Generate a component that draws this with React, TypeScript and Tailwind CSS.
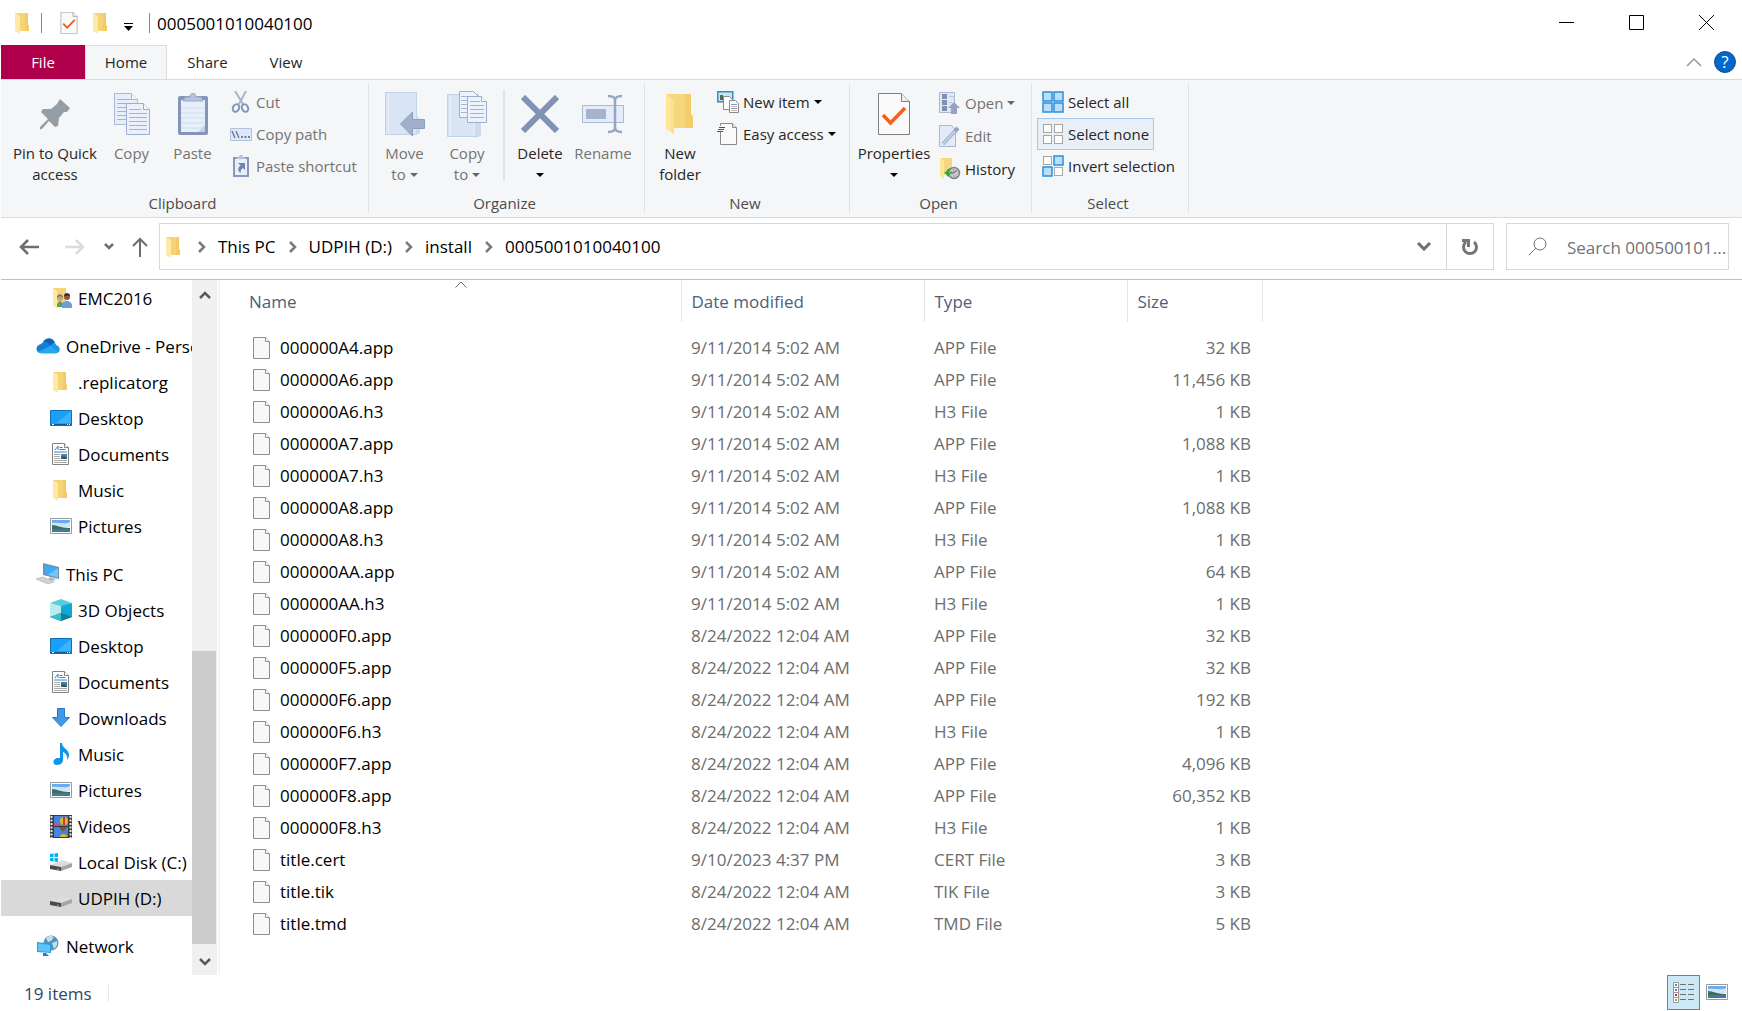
import React, { useState } from "react";

type IconProps = { className?: string };

/* ---------- shared icons ---------- */

const FolderIcon = ({ className = "w-[22px] h-[22px]" }: IconProps) => (
  <svg viewBox="0 0 22 22" className={`shrink-0 ${className}`}>
    <path d="M3 1h13v12l1 1v5H7z" fill="#f5d478" />
    <path d="M13 1h3v12l1 1v5h-4z" fill="#f2cb63" />
    <path d="M3 1l5 3v18l-5-3z" fill="#ffe9a6" />
  </svg>
);

const FileIcon = () => (
  <svg viewBox="0 0 17 22" className="w-[17px] h-[22px] shrink-0">
    <path d="M.5.5h12l4 4v17H.5z" fill="#f7f8f9" stroke="#8f8f8f" />
    <path d="M12.5.5v4h4" fill="#fff" stroke="#8f8f8f" />
  </svg>
);

const CheckDocIcon = ({ className = "w-[18px] h-[22px]" }: IconProps) => (
  <svg viewBox="0 0 32 42" className={`shrink-0 ${className}`}>
    <path d="M.5.5h23l8 8v33H.5z" fill="#fafafa" stroke="#7f7f7f" />
    <path d="M23.500.5v8h8" fill="#eee" stroke="#7f7f7f" />
    <path d="M5 22l7.500 8L27 15" fill="none" stroke="#f2601a" strokeWidth="3.500" />
  </svg>
);

const Caret = ({ className = "text-black" }: IconProps) => (
  <svg viewBox="0 0 8 4" className={`w-2 h-1 shrink-0 ${className}`}>
    <path d="M0 0h8L4 4z" fill="currentColor" />
  </svg>
);

const ChevronRight = () => (
  <svg viewBox="0 0 8 12" className="w-2 h-3 shrink-0">
    <path d="M1 1l5 5-5 5" fill="none" stroke="#7a7a7a" strokeWidth="2.500" />
  </svg>
);

/* ---------- ribbon icons ---------- */

const PinIcon = () => (
  <svg viewBox="0 0 32 32" className="w-8 h-8">
    <path d="M21 1l10 9-3 4-3 0-5 6-1 8-3 1-6-6-7 8-2 .5V29l8-8-7-7 2-3 8 0 6-5z" fill="#949ea4" />
  </svg>
);

const SheetLines = ({ x, y, w, n, step = 4 }: { x: number; y: number; w: number; n: number; step?: number }) => (
  <>
    {Array.from({ length: n }).map((_, i) => (
      <path key={i} d={`M${x} ${y + i * step}h${w}`} stroke="#a3b3d0" />
    ))}
  </>
);

const CopyIcon = () => (
  <svg viewBox="0 0 36 42" className="w-9 h-[42px]">
    <path d="M.5.5h17l6 6v25H.5z" fill="#e6eefa" stroke="#a9b9d4" />
    <path d="M17.500.5v6h6" fill="#f6f9fe" stroke="#a9b9d4" />
    <SheetLines x={3} y={6.5} w={14} n={6} />
    <path d="M12.500 10.500h17l6 6v25h-23z" fill="#eaf1fc" stroke="#9dafce" />
    <path d="M29.500 10.500v6h6" fill="#f6f9fe" stroke="#9dafce" />
    <SheetLines x={15} y={16.5} w={12} n={1} />
    <SheetLines x={15} y={20.5} w={18} n={5} />
  </svg>
);

const PasteIcon = () => (
  <svg viewBox="0 0 30 42" className="w-[30px] h-[42px]">
    <rect y="3" width="30" height="39" rx="2" fill="#8395b9" />
    <path d="M3 7h24v32H3z" fill="#e7effb" />
    <path d="M3 15h24M3 20h24M3 25h24M3 30h24M3 35h24" stroke="#d0dcee" />
    <path d="M20 39l7-7v7z" fill="#c3d1e8" />
    <path d="M5 8l2-4h5c0-5 6-5 6 0h5l2 4z" fill="#b7c3d9" stroke="#98a8c5" />
  </svg>
);

const CutIcon = () => (
  <svg viewBox="0 0 22 22" className="w-[22px] h-[22px] shrink-0">
    <path d="M5 0l8 13M16 0L9 13" stroke="#a9b5ca" strokeWidth="2" />
    <ellipse cx="6" cy="17" rx="3" ry="4" fill="none" stroke="#8294b5" strokeWidth="2" transform="rotate(25 6 17)" />
    <ellipse cx="15" cy="17" rx="3" ry="4" fill="none" stroke="#8294b5" strokeWidth="2" transform="rotate(-25 15 17)" />
  </svg>
);

const CopyPathIcon = () => (
  <svg viewBox="0 0 22 13" className="w-[22px] h-[13px] shrink-0">
    <path d="M.5.5h21v12H.5z" fill="#dfe8f7" stroke="#b4c3dc" />
    <path d="M2 3l3 7M6 3l3 7" stroke="#6c7fa5" strokeWidth="1.500" />
    <path d="M11 9h2M14.500 9h2M18 9h2" stroke="#6c7fa5" strokeWidth="2" />
  </svg>
);

const PasteShortcutIcon = () => (
  <svg viewBox="0 0 22 22" className="w-[22px] h-[22px] shrink-0">
    <path d="M4 3h14v18H4z" fill="#e7effb" stroke="#8799bd" strokeWidth="2" />
    <path d="M6 4l2-2h1c0-3 4-3 4 0h1l2 2z" fill="#b7c3d9" />
    <path d="M8 8h7v7l-2-2c-2 1-3 3-2 5-4-2-3-6-.5-7.500z" fill="#6f84ae" />
  </svg>
);

const MoveToIcon = () => (
  <svg viewBox="0 0 40 44" className="w-10 h-11">
    <path d="M.5.500h31v42H.5z" fill="#d9e4f4" stroke="#c3d1e7" />
    <path d="M3.500 1v41" stroke="#e9f0fa" />
    <path d="M31 23l4 4v15h-4z" fill="#cedaed" />
    <path d="M15.500 32l12-12v7.500h12v9h-12V44z" fill="#a0afca" stroke="#8d9fbf" />
  </svg>
);

const CopyToIcon = () => (
  <svg viewBox="0 0 40 46" className="w-10 h-[46px]">
    <path d="M.5 3.500h31v42H.5z" fill="#d9e4f4" stroke="#c3d1e7" />
    <path d="M3.500 4v41M27 30v15" stroke="#eff4fb" />
    <path d="M28 32h6v13h-6z" fill="#cedaed" />
    <path d="M12.500.5h14l5 5v21h-19z" fill="#edf3fd" stroke="#9dafce" />
    <SheetLines x={14} y={5.5} w={10} n={5} />
    <path d="M20.500 5.500h14l5 5v21h-19z" fill="#edf3fd" stroke="#9dafce" />
    <path d="M34.500 5.500v5h5" fill="#fff" stroke="#9dafce" />
    <SheetLines x={23} y={10.5} w={10} n={1} />
    <SheetLines x={23} y={14.5} w={14} n={4} />
  </svg>
);

const DeleteIcon = () => (
  <svg viewBox="0 0 38 38" className="w-[38px] h-[38px]">
    <path d="M2 2l34 34M36 2L2 36" stroke="#8193b5" strokeWidth="6" />
  </svg>
);

const RenameIcon = () => (
  <svg viewBox="0 0 42 40" className="w-[42px] h-10">
    <path d="M.5 11.500h41v17H.5z" fill="#e4ecfa" stroke="#aabad5" />
    <path d="M4 15h20v10H4z" fill="#a5b3cf" />
    <path d="M26 2c5 0 7 1 7 5v26c0 4-2 5-7 5M40 2c-5 0-7 1-7 5v26c0 4 2 5 7 5" fill="none" stroke="#95a5c3" strokeWidth="2.500" />
  </svg>
);

const BigFolderIcon = () => (
  <svg viewBox="0 0 30 42" className="w-[30px] h-[42px]">
    <path d="M1 1h25v20l2 3v11H9z" fill="#f6d77f" />
    <path d="M20 1h6v20l2 3v11h-8z" fill="#f3cd68" />
    <path d="M1 1l8 6v34l-8-5z" fill="#ffe699" />
    <path d="M6 5l3 2v34l-3-2z" fill="#fde08a" />
  </svg>
);

const NewItemIcon = () => (
  <svg viewBox="0 0 22 22" className="w-[22px] h-[22px] shrink-0">
    <path d="M.75.750h15v10h-15z" fill="#c6e6f6" stroke="#3c8db5" strokeWidth="1.500" />
    <path d="M3 4h3v5H3z" fill="#4c6c58" />
    <path d="M6.500 5.500h6l3 3v10h-9z" fill="#fff" stroke="#8a8a8a" />
    <path d="M12.500 9.500h6l3 3v9h-9z" fill="#fff" stroke="#8a8a8a" />
    <path d="M14 13.500h6M14 17.500h6" stroke="#6aa5d8" />
    <path d="M14 15.500h6M14 19.500h6" stroke="#e4a79b" />
  </svg>
);

const EasyAccessIcon = () => (
  <svg viewBox="0 0 22 22" className="w-[22px] h-[22px] shrink-0">
    <path d="M3.500.5h12l4 4v17h-16z" fill="#fafafa" stroke="#8a8a8a" />
    <path d="M15.500.5v4h4" fill="#eee" stroke="#8a8a8a" />
    <path d="M2 3h6v6H0V6h2z" fill="#f5f6f7" />
    <path d="M2 4.500h6M1 6.500h6M0 8.500h6" stroke="#1b5fa8" />
  </svg>
);

const OpenIcon = () => (
  <svg viewBox="0 0 22 22" className="w-[22px] h-[22px] shrink-0">
    <path d="M.5.5h15v20H.5z" fill="#dfe8f7" stroke="#a9b9d4" />
    <path d="M3 2h5v5H3zM3 8h5v5H3zM3 14h5v5H3z" fill="#7f90b1" />
    <path d="M10 4.500h5M10 10.500h3" stroke="#b9c6dd" />
    <path d="M15 10l6 6h-3v6h-6v-6H9z" fill="#93a3c1" />
  </svg>
);

const EditIcon = () => (
  <svg viewBox="0 0 22 22" className="w-[22px] h-[22px] shrink-0">
    <path d="M.5.5h12l4 4v17H.5z" fill="#e2ebf9" stroke="#a9b9d4" />
    <path d="M4 19L17 5" stroke="#a8b7d1" strokeWidth="4" />
    <path d="M4 19L17 5" stroke="#dfe6f2" />
    <path d="M16 6l3-3" stroke="#92a3c2" strokeWidth="4" />
  </svg>
);

const HistoryIcon = () => (
  <svg viewBox="0 0 22 22" className="w-[22px] h-[22px] shrink-0">
    <path d="M1 0h12v17H4z" fill="#f6d77f" />
    <path d="M1 0l4 3v18l-4-3z" fill="#ffe699" />
    <circle cx="15" cy="15" r="5.500" fill="#c3c8ca" stroke="#7d8588" strokeWidth="1.500" />
    <path d="M12 14h1M14 12h1M17 13h1M15 18h1" stroke="#777" />
    <path d="M14 15l3-2M14 15h-3" stroke="#555" />
    <path d="M5 14h2c1-3 3-4 6-4-2 1-3 3-3 5h2l-3 4z" fill="#2fa836" />
  </svg>
);

const Tile = ({ x, y, on }: { x: number; y: number; on?: boolean }) => (
  <rect x={x} y={y} width={on ? 9 : 8} height={on ? 9 : 8} fill={on ? "#b9e0fb" : "#fdfdfd"} stroke={on ? "#2b8fdc" : "#a6a6a6"} strokeWidth={on ? 1.5 : 1} />
);

const SelectIcon = ({ on }: { on: boolean[] }) => (
  <svg viewBox="0 0 22 22" className="w-[22px] h-[22px] shrink-0">
    <Tile x={on[0] ? 1 : 1.5} y={on[0] ? 1 : 1.5} on={on[0]} />
    <Tile x={on[1] ? 12 : 12.5} y={on[1] ? 1 : 1.5} on={on[1]} />
    <Tile x={on[2] ? 1 : 1.5} y={on[2] ? 12 : 12.5} on={on[2]} />
    <Tile x={on[3] ? 12 : 12.5} y={on[3] ? 12 : 12.5} on={on[3]} />
  </svg>
);

/* ---------- navigation pane icons ---------- */

const UserFolderIcon = () => (
  <svg viewBox="0 0 22 22" className="w-[22px] h-[22px] shrink-0">
    <path d="M3 1h13v18H6z" fill="#f5d478" />
    <path d="M3 1l4 3v18l-4-3z" fill="#ffe9a6" />
    <path d="M7 20v-3l3-3 4 3v3z" fill="#5da04f" />
    <circle cx="10" cy="11" r="3" fill="#c9a77c" />
    <path d="M7 11c0-5 6-5 6 0l-3-2z" fill="#7c7a5e" />
    <path d="M12 21v-5l4-2c4 0 6 2 6 5v2z" fill="#6e9fd4" />
    <circle cx="17" cy="10" r="3" fill="#8a5a3c" />
    <path d="M14 9c0-4 6-4 6 0z" fill="#3f3530" />
  </svg>
);

const OneDriveIcon = () => (
  <svg viewBox="0 0 24 16" className="w-6 h-4 shrink-0">
    <path d="M7 4c3-5 10-5 12 1l-6 6z" fill="#0a64b9" />
    <path d="M5 15c-6 0-6-8 0-9 3-3 6-2 8 0l4 5-7 4z" fill="#1180d6" />
    <path d="M16 6c2-2 4-1 4 1 5 1 5 8 0 8h-7V9z" fill="#1a97e8" />
    <path d="M2 14l12-6 8 6-2 1.500H5z" fill="#28a8ea" />
  </svg>
);

const DesktopIcon = () => (
  <svg viewBox="0 0 22 16" className="w-[22px] h-4 shrink-0">
    <path d="M.5.5h21v15H.5z" fill="#18a0fb" stroke="#0f6fb5" />
    <path d="M21 1v12H7z" fill="#3eb2ff" />
    <path d="M1 14.500h20" stroke="#0a5c99" />
    <path d="M2 14.500h2M17 14.500h1M19 14.500h1" stroke="#fff" />
  </svg>
);

const DocumentsIcon = () => (
  <svg viewBox="0 0 22 22" className="w-[22px] h-[22px] shrink-0">
    <path d="M2.500.5h12l4 4v17h-16z" fill="#fff" stroke="#828282" />
    <path d="M14.500.5v4h4" fill="#fff" stroke="#828282" />
    <path d="M5 7l3-4v4M9.500 4.500h3M9.500 6.500h6M4 9h13" stroke="#2b8bd0" fill="none" />
    <path d="M4 11.500h6M4 13.500h6M4 15.500h6M4 17.500h13M4 19.500h13" stroke="#a9a9a9" />
    <path d="M11 11h6v5h-6z" fill="#4b7fae" />
    <path d="M11 14l3-1 3 2v1h-6z" fill="#375c51" />
  </svg>
);

const PicturesIcon = () => (
  <svg viewBox="0 0 22 16" className="w-[22px] h-4 shrink-0">
    <path d="M.5.5h21v15H.5z" fill="#fff" stroke="#9a9a9a" />
    <path d="M2 2h18v5H2z" fill="#6cabf2" />
    <path d="M2 5c6-1 12 2 18-1v5H2z" fill="#cfe6f8" />
    <path d="M2 7c5 0 8 3 18 3v1H2z" fill="#3d6e5b" />
    <path d="M2 11h18v3H2z" fill="#3f78a6" />
  </svg>
);

const ThisPcIcon = () => (
  <svg viewBox="0 0 24 22" className="w-6 h-[22px] shrink-0">
    <path d="M7 0l16 4v12L7 12z" fill="#7c8c99" />
    <path d="M8.500 1.500l13.500 3.500v9.500L8.500 11z" fill="#38adf5" />
    <path d="M22 5v9.500L12 12z" fill="#6cc6ff" />
    <path d="M14 14l4 1 2 2-5 1-3-2z" fill="#b3bbc2" />
    <path d="M0 16l7-2 11 5-6 2z" fill="#cfd4d8" stroke="#9aa3aa" strokeWidth=".5" />
  </svg>
);

const ObjectsIcon = () => (
  <svg viewBox="0 0 22 22" className="w-[22px] h-[22px] shrink-0">
    <path d="M0 4l11-4 11 4-11 4z" fill="#53cfdc" />
    <path d="M0 4l11 3v15L0 18z" fill="#b9ecef" />
    <path d="M22 4L11 7v15l11-4z" fill="#13a7d8" />
    <path d="M0 18l11-4 11 4-11 4z" fill="#0d8292" />
    <path d="M0 18l11-4v8z" fill="#35bfcc" />
  </svg>
);

const DownloadsIcon = () => (
  <svg viewBox="0 0 22 22" className="w-[22px] h-[22px] shrink-0">
    <path d="M7.500 1.500h7v9h5L11 19.500 2.500 10.500h5z" fill="#3f98e8" stroke="#2478c4" />
  </svg>
);

const MusicIcon = () => (
  <svg viewBox="0 0 22 22" className="w-[22px] h-[22px] shrink-0">
    <path d="M10 0h2c0 5 7 6 7 12 0 2-1 4-2 5 1-5-2-7-4-8v8c0 4-4 5-7 5-4-1-3-6 1-7l3 0z" fill="#0b95ef" />
  </svg>
);

const VideosIcon = () => (
  <svg viewBox="0 0 22 23" className="w-[22px] h-[23px] shrink-0">
    <path d="M0 0h22v23H0z" fill="#3a3a3a" />
    <path d="M1.500 1v22M20.500 1v22" stroke="#e8e8e8" strokeWidth="2" strokeDasharray="2 1.500" />
    <path d="M4 1h14v10H4zM4 12h14v10H4z" fill="#4a83dc" />
    <path d="M4 9h5l2 2H4z" fill="#c34c8a" />
    <circle cx="14" cy="6" r="4" fill="#e4b81c" />
    <path d="M13 2h2v8h-2z" fill="#d3362c" />
    <path d="M9 12h8l-4 5z" fill="#2d7338" />
    <path d="M12 12h3l-1 4h-1z" fill="#c33" />
    <path d="M10 22c0-4 7-4 7 0z" fill="#e4b81c" />
  </svg>
);

const DriveIcon = ({ windows }: { windows?: boolean }) => (
  <svg viewBox="0 0 22 18" className="w-[22px] h-[18px] shrink-0">
    <path d="M0 12l12-5 10 3-11 4z" fill="#dcdcdc" />
    <path d="M0 12l11 2v4L0 16z" fill="#4a4a4a" />
    <path d="M11 14l11-4v4l-11 4z" fill="#a5a5a5" />
    <path d="M7 16l2 .5" stroke="#5dd35d" />
    {windows && <path d="M0 1l3.500-.5V4H0zM4.500.5L8 0v4H4.500zM0 5h3.500v3.500L0 8zM4.500 5H8v4l-3.500-.5z" fill="#00b4f0" />}
  </svg>
);

const NetworkIcon = () => (
  <svg viewBox="0 0 22 22" className="w-[22px] h-[22px] shrink-0">
    <circle cx="14" cy="8" r="7.500" fill="#4f95bd" />
    <path d="M9 3c3-3 6-2 8-1l-3 4-3 1zM15 8l5-2c1 4-1 6-3 8z" fill="#c3dfe9" />
    <path d="M0 7l14 2v9L0 17z" fill="#2b9de0" />
    <path d="M1 8.500l12 1.500v7L1 16z" fill="#5fc3fb" />
    <path d="M6 18h3l3 3H6z" fill="#3083ab" />
  </svg>
);

/* ---------- data ---------- */

type NavItem = { label: string; icon: React.ReactNode; root?: boolean; gap?: boolean; selected?: boolean };

const navItems: NavItem[] = [
  { label: "EMC2016", icon: <UserFolderIcon /> },
  { label: "OneDrive - Personal", icon: <OneDriveIcon />, root: true, gap: true },
  { label: ".replicatorg", icon: <FolderIcon /> },
  { label: "Desktop", icon: <DesktopIcon /> },
  { label: "Documents", icon: <DocumentsIcon /> },
  { label: "Music", icon: <FolderIcon /> },
  { label: "Pictures", icon: <PicturesIcon /> },
  { label: "This PC", icon: <ThisPcIcon />, root: true, gap: true },
  { label: "3D Objects", icon: <ObjectsIcon /> },
  { label: "Desktop", icon: <DesktopIcon /> },
  { label: "Documents", icon: <DocumentsIcon /> },
  { label: "Downloads", icon: <DownloadsIcon /> },
  { label: "Music", icon: <MusicIcon /> },
  { label: "Pictures", icon: <PicturesIcon /> },
  { label: "Videos", icon: <VideosIcon /> },
  { label: "Local Disk (C:)", icon: <DriveIcon windows /> },
  { label: "UDPIH (D:)", icon: <DriveIcon />, selected: true },
  { label: "Network", icon: <NetworkIcon />, root: true, gap: true },
];

const OLD = "9/11/2014 5:02 AM";
const NEW = "8/24/2022 12:04 AM";

const files = [
  ["000000A4.app", OLD, "APP File", "32 KB"],
  ["000000A6.app", OLD, "APP File", "11,456 KB"],
  ["000000A6.h3", OLD, "H3 File", "1 KB"],
  ["000000A7.app", OLD, "APP File", "1,088 KB"],
  ["000000A7.h3", OLD, "H3 File", "1 KB"],
  ["000000A8.app", OLD, "APP File", "1,088 KB"],
  ["000000A8.h3", OLD, "H3 File", "1 KB"],
  ["000000AA.app", OLD, "APP File", "64 KB"],
  ["000000AA.h3", OLD, "H3 File", "1 KB"],
  ["000000F0.app", NEW, "APP File", "32 KB"],
  ["000000F5.app", NEW, "APP File", "32 KB"],
  ["000000F6.app", NEW, "APP File", "192 KB"],
  ["000000F6.h3", NEW, "H3 File", "1 KB"],
  ["000000F7.app", NEW, "APP File", "4,096 KB"],
  ["000000F8.app", NEW, "APP File", "60,352 KB"],
  ["000000F8.h3", NEW, "H3 File", "1 KB"],
  ["title.cert", "9/10/2023 4:37 PM", "CERT File", "3 KB"],
  ["title.tik", NEW, "TIK File", "3 KB"],
  ["title.tmd", NEW, "TMD File", "5 KB"],
];

const crumbs = ["This PC", "UDPIH (D:)", "install", "0005001010040100"];

/* ---------- ribbon pieces ---------- */

type BigButtonProps = {
  icon: React.ReactNode;
  lines: string[];
  width: string;
  disabled?: boolean;
  caret?: boolean;
};

// caret goes beside the second line, or alone under a one line label
const BigButton = ({ icon, lines, width, disabled, caret }: BigButtonProps) => (
  <button className={`flex flex-col items-center h-[102px] shrink-0 ${width} ${disabled ? "text-[#737373]" : "text-[#262626]"}`}>
    <span className="flex h-[59px] items-center justify-center">{icon}</span>
    <span className="leading-[21px] whitespace-nowrap">{lines[0]}</span>
    <span className="flex h-[21px] items-center justify-center gap-1 leading-[21px]">
      {lines[1]}
      {caret && <Caret className={disabled ? "text-[#666]" : "text-black"} />}
    </span>
  </button>
);

type SmallButtonProps = { icon: React.ReactNode; label: string; disabled?: boolean; caret?: boolean; active?: boolean };

const SmallButton = ({ icon, label, disabled, caret, active }: SmallButtonProps) => (
  <button
    className={`flex h-8 items-center gap-1 border px-1 whitespace-nowrap ${
      active ? "border-[#a3cbf2] bg-[#e8eff7]" : "border-transparent"
    } ${disabled ? "text-[#737373]" : "text-[#262626]"}`}
  >
    {icon}
    {label}
    {caret && <Caret className={disabled ? "text-[#666]" : "text-black"} />}
  </button>
);

const Group = ({ label, width, children }: { label: string; width: string; children: React.ReactNode }) => (
  <section className={`my-1 flex shrink-0 flex-col border-r border-[#e0e1e3] ${width}`}>
    <div className="flex flex-1 pl-1">{children}</div>
    <div className="pr-1 text-center leading-5 text-[#4c4c4c]">{label}</div>
  </section>
);

const Ribbon = () => (
  <div className="flex h-[139px] border-y border-[#dadbdc] bg-[#f5f6f7] text-[15px]">
    <Group label="Clipboard" width="w-[368px]">
      <BigButton icon={<PinIcon />} lines={["Pin to Quick", "access"]} width="w-[100px]" />
      <BigButton icon={<CopyIcon />} lines={["Copy"]} width="w-[53px]" disabled />
      <BigButton icon={<PasteIcon />} lines={["Paste"]} width="w-[69px]" disabled />
      <div className="-ml-[2px] flex flex-col items-start pt-[2px]">
        <SmallButton icon={<CutIcon />} label="Cut" disabled />
        <SmallButton icon={<CopyPathIcon />} label="Copy path" disabled />
        <SmallButton icon={<PasteShortcutIcon />} label="Paste shortcut" disabled />
      </div>
    </Group>
    <Group label="Organize" width="w-[276px]">
      <BigButton icon={<MoveToIcon />} lines={["Move", "to"]} width="w-[63px]" disabled caret />
      <BigButton icon={<CopyToIcon />} lines={["Copy", "to"]} width="w-[62px]" disabled caret />
      <div className="mx-[5px] mt-[6px] h-[91px] w-[2px] bg-[#e0e1e3]" />
      <BigButton icon={<DeleteIcon />} lines={["Delete"]} width="w-[60px]" caret />
      <BigButton icon={<RenameIcon />} lines={["Rename"]} width="w-[66px]" disabled />
    </Group>
    <Group label="New" width="w-[205px]">
      <BigButton icon={<BigFolderIcon />} lines={["New", "folder"]} width="w-[62px]" />
      <div className="flex flex-col items-start pl-px pt-[2px]">
        <SmallButton icon={<NewItemIcon />} label="New item" caret />
        <SmallButton icon={<EasyAccessIcon />} label="Easy access" caret />
      </div>
    </Group>
    <Group label="Open" width="w-[182px]">
      <BigButton icon={<CheckDocIcon className="w-8 h-[42px]" />} lines={["Properties"]} width="w-20" caret />
      <div className="flex flex-col items-start gap-px pt-[3px]">
        <SmallButton icon={<OpenIcon />} label="Open" disabled caret />
        <SmallButton icon={<EditIcon />} label="Edit" disabled />
        <SmallButton icon={<HistoryIcon />} label="History" />
      </div>
    </Group>
    <Group label="Select" width="w-[157px]">
      <div className="flex flex-col items-start pl-px pt-[2px]">
        <SmallButton icon={<SelectIcon on={[true, true, true, true]} />} label="Select all" />
        <SmallButton icon={<SelectIcon on={[false, false, false, false]} />} label="Select none" active />
        <SmallButton icon={<SelectIcon on={[false, true, true, false]} />} label="Invert selection" />
      </div>
    </Group>
  </div>
);

/* ---------- window ---------- */

const TitleBar = () => (
  <header className="flex h-[45px] items-center pr-px pl-[11px]">
    <FolderIcon />
    <div className="ml-[7px] h-5 w-px bg-[#8a8a8a]" />
    <button aria-label="Properties" className="ml-[18px]">
      <CheckDocIcon />
    </button>
    <button aria-label="New folder" className="ml-3">
      <FolderIcon />
    </button>
    <button aria-label="Customize Quick Access Toolbar" className="ml-3">
      <svg viewBox="0 0 9 8" className="mt-2 w-[9px] h-2">
        <path d="M0 .5h9" stroke="#000" />
        <path d="M0 3h9L4.500 8z" />
      </svg>
    </button>
    <div className="ml-4 h-5 w-px bg-[#8a8a8a]" />
    <h1 className="ml-[7px] flex-1 pt-[2px] text-black">0005001010040100</h1>
    <button aria-label="Minimize" className="flex h-full w-[70px] items-center justify-center">
      <svg viewBox="0 0 15 15" className="w-[15px] h-[15px]">
        <path d="M0 7.500h15" stroke="#000" />
      </svg>
    </button>
    <button aria-label="Maximize" className="flex h-full w-[70px] items-center justify-center">
      <svg viewBox="0 0 15 15" className="w-[15px] h-[15px]">
        <path d="M.5.5h14v14H.5z" fill="none" stroke="#000" />
      </svg>
    </button>
    <button aria-label="Close" className="flex h-full w-[70px] items-center justify-center">
      <svg viewBox="0 0 15 15" className="w-[15px] h-[15px]">
        <path d="M0 0l15 15M15 0L0 15" stroke="#000" />
      </svg>
    </button>
  </header>
);

const Tabs = () => (
  <nav className="flex h-[34px] text-[15px] text-[#262626]">
    <button className="w-[84px] bg-[#b1004b] text-white">File</button>
    <button className="-mb-px w-[82px] border border-b-0 border-[#dadbdc] bg-[#f5f6f7] pb-[2px]">Home</button>
    <button className="w-[81px]">Share</button>
    <button className="w-[76px]">View</button>
    <div className="flex flex-1 items-center justify-end gap-3 pr-[6px]">
      <button aria-label="Minimize the Ribbon">
        <svg viewBox="0 0 16 9" className="w-4 h-[9px]">
          <path d="M1 8l7-7 7 7" fill="none" stroke="#9a9a9a" strokeWidth="1.500" />
        </svg>
      </button>
      <button aria-label="Help" className="flex size-[22px] items-center justify-center rounded-full border border-[#1d4f86] bg-[#0067cf] text-[17px] text-white">
        ?
      </button>
    </div>
  </nav>
);

const AddressBar = () => {
  const [search, setSearch] = useState("");

  return (
    <div className="flex h-[62px] items-start border-b border-[#c0c0c0] pt-[5px] pr-[13px] pl-[18px]">
      <div className="flex h-[47px] w-[140px] shrink-0 items-center text-[#6e6e6e]">
        <button aria-label="Back">
          <svg viewBox="0 0 20 16" className="w-5 h-4">
            <path d="M20 8H2M9 1L2 8l7 7" fill="none" stroke="currentColor" strokeWidth="2.500" />
          </svg>
        </button>
        <button aria-label="Forward" className="ml-[26px] text-[#dcdcdc]">
          <svg viewBox="0 0 20 16" className="w-5 h-4">
            <path d="M0 8h18M11 1l7 7-7 7" fill="none" stroke="currentColor" strokeWidth="2.500" />
          </svg>
        </button>
        <button aria-label="Recent locations" className="ml-[19px]">
          <svg viewBox="0 0 10 7" className="w-[10px] h-[7px]">
            <path d="M1 1l4 4 4-4" fill="none" stroke="currentColor" strokeWidth="2.500" />
          </svg>
        </button>
        <button aria-label="Up" className="ml-[18px]">
          <svg viewBox="0 0 16 20" className="w-4 h-5">
            <path d="M8 20V2M1 9l7-7 7 7" fill="none" stroke="currentColor" strokeWidth="2" />
          </svg>
        </button>
      </div>

      <div className="flex h-[47px] flex-1 items-center border border-[#d9d9d9] pl-[3px]">
        <FolderIcon />
        {crumbs.map((crumb) => (
          <div key={crumb} className="flex items-center">
            <span className="mr-3 ml-[13px]">
              <ChevronRight />
            </span>
            <button className="whitespace-nowrap text-black">{crumb}</button>
          </div>
        ))}
        <div className="flex-1" />
        <button aria-label="Previous locations" className="flex h-full w-11 items-center justify-center">
          <svg viewBox="0 0 14 9" className="w-[14px] h-[9px]">
            <path d="M1 1l6 6 6-6" fill="none" stroke="#6e6e6e" strokeWidth="3" />
          </svg>
        </button>
        <button aria-label="Refresh" className="flex h-full w-[47px] items-center justify-center border-l border-[#d9d9d9]">
          <svg viewBox="0 0 18 18" className="w-[18px] h-[18px]">
            <path d="M13 4A6.500 6.500 0 1 1 5 4" fill="none" stroke="#757575" strokeWidth="3" />
            <path d="M1 1h8v8H6V4H1z" fill="#757575" />
          </svg>
        </button>
      </div>

      <label className="ml-3 flex h-[47px] w-[223px] items-center border border-[#d9d9d9] pl-[21px]">
        <svg viewBox="0 0 19 19" className="w-[19px] h-[19px] shrink-0">
          <circle cx="12" cy="7" r="6" fill="none" stroke="#707070" />
          <path d="M8 11l-7 7" stroke="#707070" />
        </svg>
        <input
          aria-label="Search"
          value={search}
          onChange={(e) => setSearch(e.target.value)}
          placeholder="Search 000500101..."
          className="ml-5 w-full min-w-0 pt-[2px] outline-none placeholder:text-[#737373]"
        />
      </label>
    </div>
  );
};

const NavPane = () => (
  <aside className="flex w-[219px] shrink-0 border-r-2 border-[#f5f5f5]">
    <div className="w-[191px] shrink-0 overflow-hidden">
      {navItems.map((item, i) => (
        <button
          key={i}
          className={`flex h-9 w-full items-center gap-[6px] text-left whitespace-nowrap text-black ${item.gap ? "mt-3" : ""} ${
            item.root ? "pl-[35px]" : "pl-[49px]"
          } ${item.selected ? "bg-[#d9d9d9]" : ""}`}
        >
          <span className={`flex shrink-0 justify-center ${item.root ? "w-6" : "w-[22px]"}`}>{item.icon}</span>
          <span className="pt-[2px]">{item.label}</span>
        </button>
      ))}
    </div>
    <div className="flex w-[25px] flex-col items-center bg-[#f0f0f0]">
      <button aria-label="Scroll up" className="flex h-7 shrink-0 items-center">
        <svg viewBox="0 0 12 9" className="w-3 h-[9px]">
          <path d="M1 8l5-5 5 5" fill="none" stroke="#5a5a5a" strokeWidth="2.500" />
        </svg>
      </button>
      <div className="flex w-full flex-1 flex-col">
        <div className="flex-[343_343_0%]" />
        <div className="mr-px flex-[293_293_0%] bg-[#cdcdcd]" />
        <div className="flex-[5_5_0%]" />
      </div>
      <button aria-label="Scroll down" className="flex h-[26px] shrink-0 items-center">
        <svg viewBox="0 0 12 9" className="w-3 h-[9px]">
          <path d="M1 1l5 5 5-5" fill="none" stroke="#5a5a5a" strokeWidth="2.500" />
        </svg>
      </button>
    </div>
  </aside>
);

const FileList = () => (
  <main className="flex-1 overflow-hidden">
    <table className="table-fixed w-[1042px] text-left text-[#6d6d6d]">
      <colgroup>
        <col className="w-[461px]" />
        <col className="w-[243px]" />
        <col className="w-[203px]" />
        <col className="w-[135px]" />
      </colgroup>
      <thead className="text-[#4c607a]">
        <tr className="h-[42px]">
          <th className="relative border-r border-[#e5e5e5] pt-[2px] pl-[29px] font-normal">
            Name
            <svg viewBox="0 0 12 7" className="absolute top-[1px] left-[235px] w-3 h-[7px]">
              <path d="M.5 6.500L6 1l5.500 5.500" fill="none" stroke="#6d6d6d" />
            </svg>
          </th>
          <th className="border-r border-[#e5e5e5] pt-[2px] pl-[10px] font-normal">Date modified</th>
          <th className="border-r border-[#e5e5e5] pt-[2px] pl-[10px] font-normal">Type</th>
          <th className="border-r border-[#e5e5e5] pt-[2px] pl-[10px] font-normal">Size</th>
        </tr>
      </thead>
      <tbody>
        <tr className="h-[10px]" aria-hidden="true">
          <td colSpan={4} />
        </tr>
        {files.map(([name, date, type, size]) => (
          <tr key={name} className="h-8">
            <td className="pl-[33px] text-black">
              <div className="flex items-center gap-[10px]">
                <FileIcon />
                {name}
              </div>
            </td>
            <td className="pl-[10px]">{date}</td>
            <td className="pl-[10px]">{type}</td>
            <td className="pr-[11px] text-right">{size}</td>
          </tr>
        ))}
      </tbody>
    </table>
  </main>
);

const StatusBar = () => (
  <footer className="flex h-9 items-start pr-[14px] pl-[23px] text-[#2f4668]">
    <span className="pt-[7px]">19 items</span>
    <div className="mt-[10px] ml-4 h-[17px] w-px bg-[#e8e8e8]" />
    <div className="flex-1" />
    <button aria-label="Details view" className="flex h-[35px] w-[33px] items-center justify-center border border-[#2c9ad1] bg-[#cce8f6]">
      <svg viewBox="0 0 21 21" className="w-[21px] h-[21px]">
        <path d="M.5.5h5v20h-5zM0 5.500h6M0 10.500h6M0 15.500h6" fill="#fff" stroke="#9a9a9a" />
        <path d="M2 2h2v2H2z" fill="#4a9b9b" />
        <path d="M2 7h2v2H2z" fill="#5c7fc4" />
        <path d="M2 12h2v2H2z" fill="#c43a2a" />
        <path d="M2 17h2v2H2z" fill="#9aa36c" />
        <path d="M7 2.500h6M15 2.500h6M7 7.500h6M15 7.500h6M7 12.500h6M15 12.500h6M7 17.500h6M15 17.500h6" stroke="#707070" />
      </svg>
    </button>
    <button aria-label="Large icons view" className="mt-[9px] ml-[6px]">
      <PicturesIcon />
    </button>
  </footer>
);

const App: React.FC = () => {
  return (
    <div className="flex min-h-screen flex-col bg-white pl-px font-['Open_Sans','Noto_Sans',sans-serif] text-[17px] leading-6">
      <TitleBar />
      <Tabs />
      <Ribbon />
      <AddressBar />
      <div className="flex flex-1">
        <NavPane />
        <FileList />
      </div>
      <StatusBar />
    </div>
  );
};

export default App;
